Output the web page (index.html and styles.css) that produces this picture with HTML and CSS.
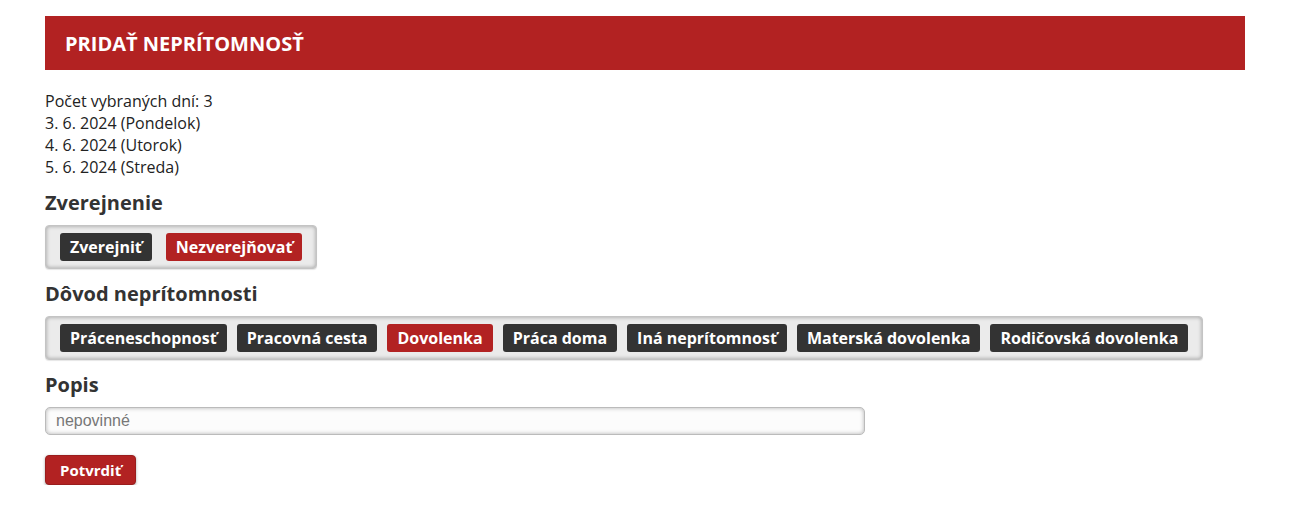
FILE: index.html
```html
<!DOCTYPE html>
<html lang="sk">
<head>
<meta charset="utf-8">
<title>Pridať neprítomnosť</title>
<link rel="stylesheet" href="styles.css">
</head>
<body>
<div class="page">
  <div class="header"><h1 class="title">Pridať neprítomnosť</h1></div>
  <div class="days">
    <div>Počet vybraných dní: 3</div>
    <div>3. 6. 2024 (Pondelok)</div>
    <div>4. 6. 2024 (Utorok)</div>
    <div>5. 6. 2024 (Streda)</div>
  </div>
  <h2 class="label">Zverejnenie</h2>
  <div class="group group-wide">
    <span class="opt">Zverejniť</span>
    <span class="opt active">Nezverejňovať</span>
  </div>
  <h2 class="label">Dôvod neprítomnosti</h2>
  <div class="group">
    <span class="opt">Práceneschopnosť</span>
    <span class="opt">Pracovná cesta</span>
    <span class="opt active">Dovolenka</span>
    <span class="opt">Práca doma</span>
    <span class="opt">Iná neprítomnosť</span>
    <span class="opt">Materská dovolenka</span>
    <span class="opt">Rodičovská dovolenka</span>
  </div>
  <h2 class="label">Popis</h2>
  <input class="field" type="text" placeholder="nepovinné">
  <div class="actions"><button class="submit">Potvrdiť</button></div>
</div>
</body>
</html>
```
FILE: styles.css
```css
html, body {
  margin: 0;
  padding: 0;
  background: #fff;
}
body {
  font-family: "Open Sans", "Liberation Sans", sans-serif;
  color: #222;
  font-size: 16px;
}
.page {
  width: 1200px;
  margin: 16px auto 0;
}
.header {
  background: #b22222;
  height: 54px;
  display: flex;
  align-items: center;
  padding: 0 20px;
}
.title {
  margin: 0;
  color: #fff;
  font-size: 20px;
  font-weight: 700;
  text-transform: uppercase;
  letter-spacing: 0;
}
.days {
  margin-top: 20px;
  line-height: 22px;
}
.label {
  margin: 12px 0 10px;
  font-size: 20px;
  font-weight: 700;
  color: #333;
  line-height: 25px;
}
.group {
  display: inline-flex;
  gap: 10px;
  padding: 7px 14px;
  background: #ebebeb;
  border: 1px solid #c4c4c4;
  border-radius: 4px;
  box-shadow: inset 0 0 4px rgba(0,0,0,0.35), 0 1px 1px rgba(0,0,0,0.1);
}
.group-wide {
  gap: 14px;
}
.opt {
  display: inline-block;
  height: 28px;
  line-height: 28px;
  padding: 0 10px;
  background: #333;
  color: #fff;
  font-weight: 700;
  font-size: 16px;
  border-radius: 3px;
}
.opt.active {
  background: #b22222;
}
.field {
  display: block;
  box-sizing: border-box;
  width: 820px;
  height: 28px;
  margin: 2px 0 0;
  padding: 0 10px;
  border: 1px solid #bbb;
  border-radius: 5px;
  background: #fcfcfc;
  box-shadow: inset 0 0 4px rgba(0,0,0,0.3);
  font-family: "Liberation Sans", Arial, sans-serif;
  font-size: 16px;
  color: #333;
}
.field::placeholder {
  color: #777;
}
.actions {
  margin-top: 20px;
}
.submit {
  height: 30px;
  padding: 0 14px;
  border: 1px solid #9a1d1d;
  border-radius: 4px;
  background: #b22222;
  color: #fff;
  font-family: "Open Sans", "Liberation Sans", sans-serif;
  font-weight: 700;
  font-size: 15px;
  box-shadow: 0 1px 3px rgba(0,0,0,0.35);
}
```
